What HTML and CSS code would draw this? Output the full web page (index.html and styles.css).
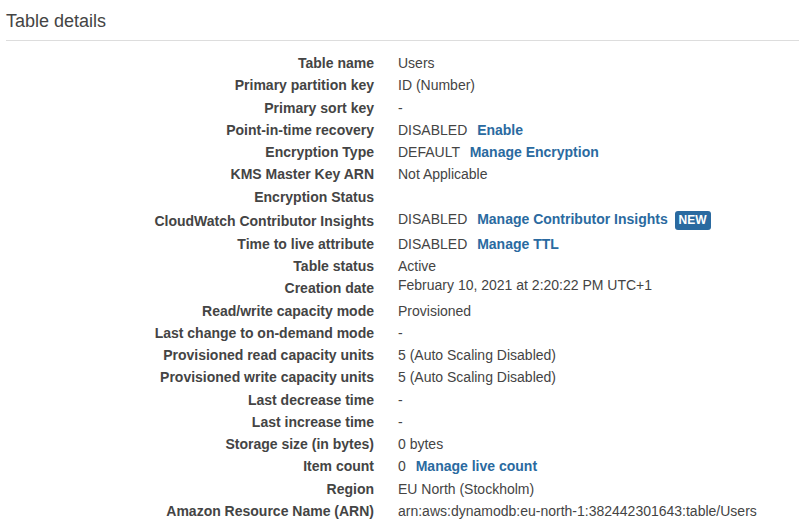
FILE: index.html
```html
<!DOCTYPE html>
<html>
<head>
<meta charset="utf-8">
<link rel="stylesheet" href="styles.css">
</head>
<body>
<div class="panel">
  <h2 class="title">Table details</h2>
  <table class="details">
    <tr><th>Table name</th><td>Users</td></tr>
    <tr><th>Primary partition key</th><td>ID (Number)</td></tr>
    <tr><th>Primary sort key</th><td>-</td></tr>
    <tr><th>Point-in-time recovery</th><td>DISABLED <a class="link">Enable</a></td></tr>
    <tr><th>Encryption Type</th><td>DEFAULT <a class="link">Manage Encryption</a></td></tr>
    <tr><th>KMS Master Key ARN</th><td>Not Applicable</td></tr>
    <tr><th>Encryption Status</th><td></td></tr>
    <tr class="badge-row"><th>CloudWatch Contributor Insights</th><td>DISABLED <a class="link">Manage Contributor Insights</a> <span class="badge">NEW</span></td></tr>
    <tr><th>Time to live attribute</th><td>DISABLED <a class="link">Manage TTL</a></td></tr>
    <tr><th>Table status</th><td>Active</td></tr>
    <tr class="date-row"><th>Creation date</th><td>February 10, 2021 at 2:20:22 PM UTC+1</td></tr>
    <tr><th>Read/write capacity mode</th><td>Provisioned</td></tr>
    <tr><th>Last change to on-demand mode</th><td>-</td></tr>
    <tr><th>Provisioned read capacity units</th><td>5 (Auto Scaling Disabled)</td></tr>
    <tr><th>Provisioned write capacity units</th><td>5 (Auto Scaling Disabled)</td></tr>
    <tr><th>Last decrease time</th><td>-</td></tr>
    <tr><th>Last increase time</th><td>-</td></tr>
    <tr><th>Storage size (in bytes)</th><td>0 bytes</td></tr>
    <tr><th>Item count</th><td>0 <a class="link">Manage live count</a></td></tr>
    <tr><th>Region</th><td>EU North (Stockholm)</td></tr>
    <tr><th>Amazon Resource Name (ARN)</th><td>arn:aws:dynamodb:eu-north-1:382442301643:table/Users</td></tr>
  </table>
</div>
</body>
</html>
```
FILE: styles.css
```css
html, body {
  margin: 0;
  padding: 0;
  background: #fff;
}
body {
  font-family: "Liberation Sans", Arial, sans-serif;
  font-size: 14px;
  color: #444;
}
.panel {
  padding: 0 0 0 6px;
}
.title {
  margin: 0;
  padding: 10px 0 8px 0;
  font-size: 18px;
  font-weight: normal;
  line-height: 22px;
  color: #444;
  border-bottom: 1px solid #ddd;
}
.details {
  border-collapse: collapse;
  margin-top: 11px;
  width: 100%;
}
.details th {
  width: 368px;
  text-align: right;
  font-weight: bold;
  padding: 3px 24px 3px 0;
  line-height: 16.25px;
  vertical-align: middle;
  white-space: nowrap;
}
.details td {
  padding: 3px 0;
  line-height: 16.25px;
  vertical-align: middle;
  white-space: nowrap;
}
.link {
  color: #2a6aa0;
  font-weight: bold;
  margin-left: 6px;
  text-decoration: none;
}
.badge {
  display: inline-block;
  vertical-align: middle;
  background: #2a6aa0;
  color: #fff;
  font-weight: bold;
  font-size: 12px;
  line-height: 17px;
  padding: 1px 4px;
  border-radius: 3px;
  margin-left: 3px;
}
.badge-row th {
  padding-top: 4px;
  padding-bottom: 2px;
}
.date-row td {
  padding-top: 0;
  padding-bottom: 6px;
}
```
